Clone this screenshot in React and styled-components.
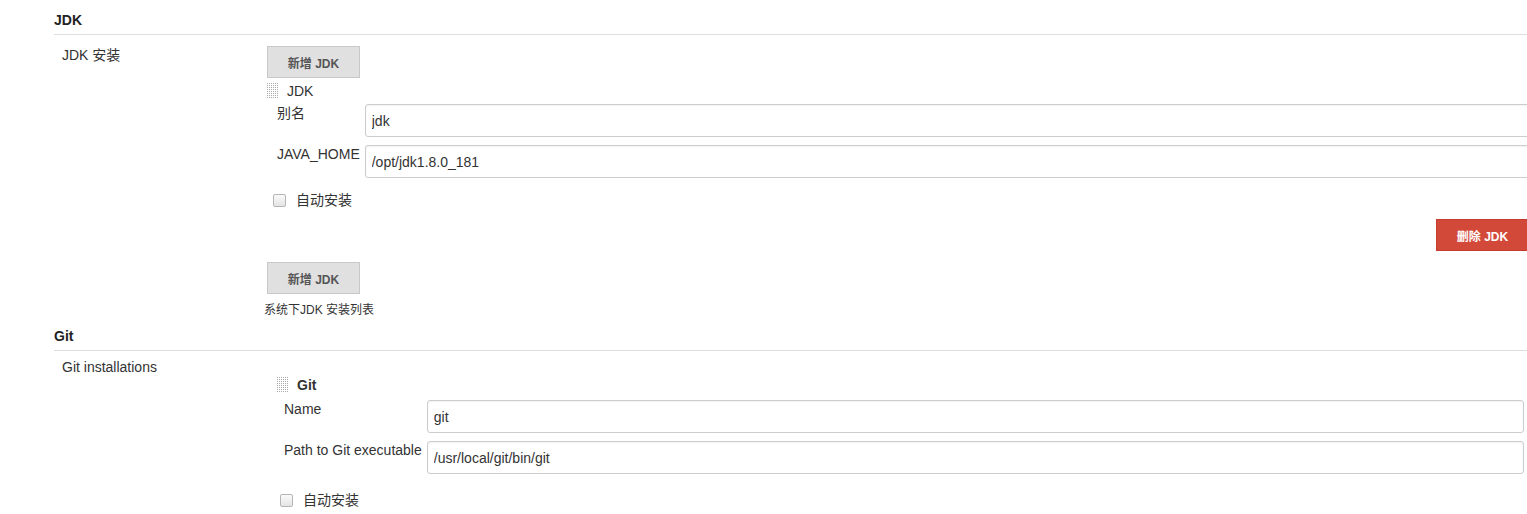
import React from "react";
import styled, { createGlobalStyle } from "styled-components";

const Global = createGlobalStyle`
  html, body { margin: 0; padding: 0; background: #fff; overflow: hidden; }
  body {
    font-family: "Liberation Sans", Arial, "Noto Sans CJK SC", sans-serif;
    font-size: 14px;
    color: #333;
  }
`;

const Page = styled.div`
  width: 1535px;
  padding-left: 54px;
  box-sizing: border-box;
`;

const SectionHeader = styled.div`
  margin-top: ${(p) => p.$top}px;
  font-weight: bold;
  font-size: 14px;
  line-height: 20px;
  color: #222;
  padding-bottom: 4px;
  border-bottom: 1px solid #ddd;
`;

const Row = styled.div`
  display: grid;
  grid-template-columns: 213px 1fr;
`;

const RowLabel = styled.div`
  padding: ${(p) => p.$top}px 0 0 8px;
  line-height: 20px;
  color: #333;
`;

const RowBody = styled.div`
  display: flex;
  flex-direction: column;
  align-items: flex-start;
  padding-top: ${(p) => p.$top}px;
`;

const Button = styled.button`
  font-family: "Liberation Sans", Arial, "Noto Sans CJK SC", sans-serif;
  font-size: 12px;
  font-weight: bold;
  height: 32px;
  padding: 0;
  width: 93px;
  margin-top: ${(p) => p.$top || 0}px;
  margin-right: ${(p) => p.$mr || 0}px;
  border: 1px solid ${(p) => (p.$danger ? "#c23d2e" : "#c9c9c9")};
  background: ${(p) => (p.$danger ? "#d24939" : "#e0e0e0")};
  color: ${(p) => (p.$danger ? "#fff" : "#555")};
  border-radius: 0;
  cursor: pointer;
  align-self: ${(p) => (p.$right ? "flex-end" : "flex-start")};
`;

const Chunk = styled.div`
  align-self: stretch;
  display: flex;
  flex-direction: column;
  margin: ${(p) => p.$top}px ${(p) => p.$right}px 0 ${(p) => p.$left}px;
`;

const HandleRow = styled.div`
  display: flex;
  align-items: center;
  gap: 8px;
  line-height: 18px;
  font-weight: ${(p) => (p.$bold ? "bold" : "normal")};
  color: #333;
`;

const Fields = styled.div`
  display: grid;
  grid-template-columns: auto 1fr;
  column-gap: 5px;
  row-gap: 8px;
  margin-top: ${(p) => p.$top}px;
  padding-left: ${(p) => p.$indent}px;
`;

const FieldLabel = styled.div`
  line-height: 18px;
  color: #333;
  white-space: nowrap;
`;

const TextInput = styled.input`
  height: 33px;
  box-sizing: border-box;
  width: 100%;
  border: 1px solid #ccc;
  border-radius: 3px;
  box-shadow: inset 0 1px 2px rgba(0, 0, 0, 0.06);
  padding: 0 6px;
  font-family: "Liberation Sans", Arial, "Noto Sans CJK SC", sans-serif;
  font-size: 14px;
  color: #333;
  outline: none;
`;

const CheckRow = styled.label`
  display: flex;
  align-items: center;
  gap: 10px;
  line-height: 20px;
  margin-top: ${(p) => p.$top}px;
  padding-left: ${(p) => p.$indent}px;
  color: #333;
`;

const Check = styled.input`
  appearance: none;
  -webkit-appearance: none;
  margin: 0;
  width: 13px;
  height: 13px;
  border: 1px solid #b5b5b5;
  border-radius: 2px;
  background: linear-gradient(#fafafa, #e4e4e4);
  box-sizing: border-box;
`;

const Description = styled.div`
  font-size: 12px;
  line-height: 16px;
  margin-top: 8px;
  margin-left: -3px;
  color: #333;
`;

const Handle = () => (
  <svg width="12" height="16" viewBox="0 0 12 16">
    {Array.from({ length: 8 }).map((_, r) =>
      Array.from({ length: 6 }).map((_, c) => (
        <rect key={`${r}-${c}`} x={c * 2} y={r * 2} width="1" height="1" fill="#aaaaaa" />
      ))
    )}
  </svg>
);

export default function App() {
  return (
    <>
      <Global />
      <Page>
        <SectionHeader $top={10}>JDK</SectionHeader>
        <Row>
          <RowLabel $top={10}>JDK 安装</RowLabel>
          <RowBody $top={11}>
            <Button>新增 JDK</Button>
            <Chunk $top={4} $left={0} $right={0}>
              <HandleRow>
                <Handle />
                <span>JDK</span>
              </HandleRow>
              <Fields $top={4} $indent={10}>
                <FieldLabel>别名</FieldLabel>
                <TextInput defaultValue="jdk" />
                <FieldLabel>JAVA_HOME</FieldLabel>
                <TextInput defaultValue="/opt/jdk1.8.0_181" />
              </Fields>
              <CheckRow $top={12} $indent={6}>
                <Check type="checkbox" />
                <span>自动安装</span>
              </CheckRow>
              <Button $danger $right $top={9} $mr={6}>删除 JDK</Button>
            </Chunk>
            <Button $top={11}>新增 JDK</Button>
            <Description>系统下JDK 安装列表</Description>
          </RowBody>
        </Row>

        <SectionHeader $top={8}>Git</SectionHeader>
        <Row>
          <RowLabel $top={6}>Git installations</RowLabel>
          <RowBody $top={25}>
            <Chunk $top={0} $left={10} $right={11}>
              <HandleRow $bold>
                <Handle />
                <span>Git</span>
              </HandleRow>
              <Fields $top={6} $indent={7}>
                <FieldLabel>Name</FieldLabel>
                <TextInput defaultValue="git" />
                <FieldLabel>Path to Git executable</FieldLabel>
                <TextInput defaultValue="/usr/local/git/bin/git" />
              </Fields>
              <CheckRow $top={16} $indent={3}>
                <Check type="checkbox" />
                <span>自动安装</span>
              </CheckRow>
            </Chunk>
          </RowBody>
        </Row>
      </Page>
    </>
  );
}
